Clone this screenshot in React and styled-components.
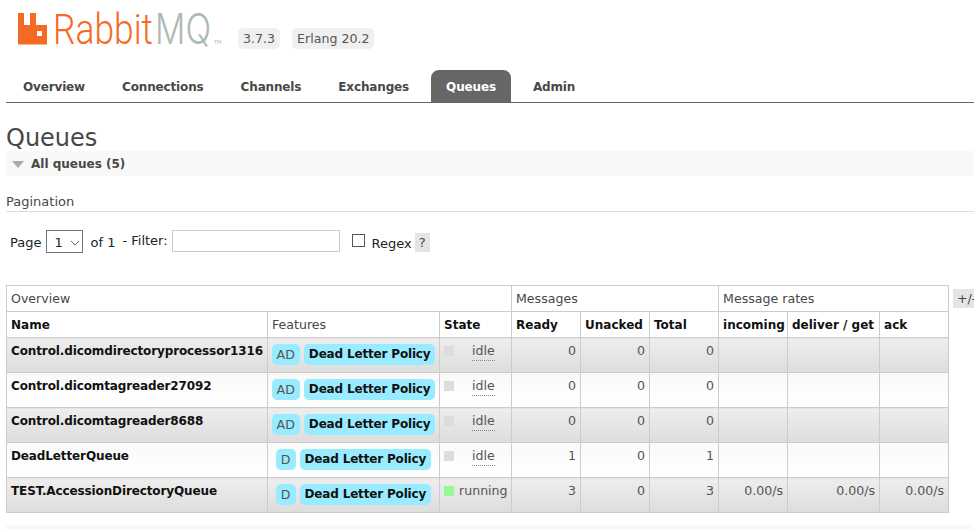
import React from 'react';
import styled, { createGlobalStyle } from 'styled-components';

const GlobalStyle = createGlobalStyle`
    html, body {
        margin: 0;
        padding: 0;
        height: 529px;
        overflow: hidden;
        background: #fff;
    }
    body {
        font-family: "DejaVu Sans", Verdana, sans-serif;
        font-size: 12.6px;
        color: #484848;
    }
`;

const Page = styled.div`
    padding-left: 6px;
    width: 968px;
    height: 529px;
    overflow: hidden;
`;

const Header = styled.header`
    display: flex;
    align-items: flex-start;
    height: 70px;
`;

const Logo = styled.svg`
    display: block;
    margin: 8px 0 0 11px;
    flex: none;
`;

const Versions = styled.div`
    display: flex;
    gap: 12px;
    margin: 28px 0 0 9px;
`;

const VersionTag = styled.span`
    background: #f0f0f0;
    border-radius: 5px;
    height: 21px;
    line-height: 21px;
    padding: 0 5px;
    color: #555;
`;

const Tabs = styled.nav`
    display: flex;
    gap: 7px;
    height: 32px;
    padding-left: 2px;
    border-bottom: 1px solid #666;
`;

const Tab = styled.a`
    display: block;
    height: 32px;
    padding: 0 15px;
    line-height: 34px;
    font-weight: bold;
    font-size: 12px;
    letter-spacing: -0.15px;
    color: ${({ $active }) => ($active ? '#fff' : '#484848')};
    background: ${({ $active }) => ($active ? '#666' : 'transparent')};
    border-radius: 8px 8px 0 0;
`;

const Title = styled.h1`
    margin: 20px 0 0;
    font-size: 24px;
    font-weight: normal;
    line-height: 30px;
    height: 28px;
    color: #484848;
`;

const SectionBar = styled.div`
    display: flex;
    align-items: center;
    height: 25px;
    background: #f8f8f8;
    font-weight: bold;
    font-size: 12px;
    color: #484848;
`;

const Arrow = styled.span`
    width: 0;
    height: 0;
    margin: 1px 7px 0 6px;
    border-left: 6px solid transparent;
    border-right: 6px solid transparent;
    border-top: 7px solid #aaa;
`;

const SubHeading = styled.h3`
    margin: 17px 0 0;
    height: 18px;
    line-height: 18px;
    font-size: 13px;
    font-weight: normal;
    color: #484848;
    border-bottom: 1px solid #ddd;
`;

const FilterRow = styled.div`
    display: flex;
    align-items: center;
    height: 24px;
    margin-top: 17px;
    padding-left: 4px;
    font-size: 13px;
    color: #222;
`;

const PageSelect = styled.select`
    appearance: none;
    box-sizing: border-box;
    width: 37px;
    height: 23px;
    margin: 0 7px 0 5px;
    padding: 2px 0 0 7px;
    font-family: inherit;
    font-size: 13px;
    color: #222;
    background: #fff url("data:image/svg+xml,%3Csvg xmlns='http://www.w3.org/2000/svg' width='10' height='6'%3E%3Cpath d='M1 1l4 4 4-4' fill='none' stroke='%23666' stroke-width='1'/%3E%3C/svg%3E") no-repeat 23px 9px;
    border: 1px solid #767676;
    border-radius: 0;
`;

const FilterText = styled.span`
    margin-left: ${({ $gap }) => $gap || 0}px;
    transform: translateY(${({ $shift }) => $shift || 0}px);
    white-space: nowrap;
`;

const FilterInput = styled.input`
    box-sizing: border-box;
    flex: none;
    width: 168px;
    height: 22px;
    margin-left: 4px;
    border: 1px solid #ccc;
    background: #fff;
    padding: 0 3px;
`;

const RegexBox = styled.input`
    appearance: none;
    box-sizing: border-box;
    flex: none;
    width: 13px;
    height: 13px;
    margin: 0 7px 1px 12px;
    border: 1px solid #555;
    background: #fff;
`;

const Help = styled.span`
    display: block;
    width: 15px;
    height: 19px;
    line-height: 19px;
    margin: 2px 0 0 3px;
    text-align: center;
    background: #e4e4e4;
    color: #484848;
`;

const TableArea = styled.div`
    display: flex;
    align-items: flex-start;
    margin-top: 32px;
`;

const QueueTable = styled.table`
    flex: none;
    width: 943px;
    table-layout: fixed;
    border-collapse: collapse;
    border: 1px solid #ccc;
`;

const GroupCell = styled.th`
    height: 25px;
    padding: 0 4px;
    text-align: left;
    font-weight: normal;
    color: #484848;
    border: 1px solid #ccc;
    background: #fff;
`;

const ColumnCell = styled.th`
    height: 25px;
    padding: 0 4px;
    text-align: left;
    font-size: ${({ $plain }) => ($plain ? '12.6px' : '12px')};
    font-weight: ${({ $plain }) => ($plain ? 'normal' : 'bold')};
    color: ${({ $plain }) => ($plain ? '#484848' : '#111')};
    white-space: nowrap;
    border: 1px solid #ccc;
    background: #fff;
`;

const Row = styled.tr`
    background: ${({ $odd }) =>
        $odd
            ? 'linear-gradient(#eee, #ddd)'
            : 'linear-gradient(#f9f9f9, #fff)'};
`;

const Cell = styled.td`
    height: 35px;
    box-sizing: border-box;
    padding: 6px 4px 0;
    border: 1px solid #ccc;
    vertical-align: top;
    text-align: ${({ $right }) => ($right ? 'right' : 'left')};
    color: #555;
    line-height: 14px;
    background: inherit;
`;

const NameCell = styled(Cell)`
    font-size: 12px;
    font-weight: bold;
    letter-spacing: -0.12px;
    color: #111;
    white-space: nowrap;
`;

const FeatureCell = styled(Cell)`
    padding: 6px 0 0;
`;

const Features = styled.div`
    display: flex;
    justify-content: center;
    gap: 4px;
`;

const Pill = styled.span`
    display: block;
    height: 21px;
    line-height: 21px;
    padding: 0 5px;
    border-radius: 5px;
    background: #99ebff;
    white-space: nowrap;
    color: ${({ $strong }) => ($strong ? '#111' : '#555')};
    font-size: ${({ $strong }) => ($strong ? '12px' : '12.6px')};
    font-weight: ${({ $strong }) => ($strong ? 'bold' : 'normal')};
    letter-spacing: ${({ $strong }) => ($strong ? '-0.17px' : '0')};
`;

const StateBox = styled.div`
    display: flex;
    align-items: flex-start;
`;

const StateDot = styled.span`
    flex: none;
    width: 10px;
    height: 10px;
    margin-top: 2px;
    background: ${({ $running }) => ($running ? '#98f898' : '#ddd')};
`;

const StateLabel = styled.span`
    flex: none;
    white-space: nowrap;
    margin-left: ${({ $idle }) => ($idle ? '18px' : '5px')};
    padding-bottom: 2px;
    border-bottom: ${({ $idle }) => ($idle ? '1px dotted #888' : 'none')};
`;

const ToggleColumns = styled.span`
    display: block;
    flex: none;
    margin: 4px 0 0 4px;
    width: 30px;
    height: 19px;
    line-height: 19px;
    padding-left: 4px;
    background: #e4e4e4;
    color: #484848;
    white-space: nowrap;
`;

const NextSection = styled.div`
    height: 4px;
    margin-top: 12px;
    background: #f8f8f8;
`;

const queues = [
    { name: 'Control.dicomdirectoryprocessor1316', flag: 'AD', state: 'idle', ready: 0, unacked: 0, total: 0 },
    { name: 'Control.dicomtagreader27092', flag: 'AD', state: 'idle', ready: 0, unacked: 0, total: 0 },
    { name: 'Control.dicomtagreader8688', flag: 'AD', state: 'idle', ready: 0, unacked: 0, total: 0 },
    { name: 'DeadLetterQueue', flag: 'D', state: 'idle', ready: 1, unacked: 0, total: 1 },
    { name: 'TEST.AccessionDirectoryQueue', flag: 'D', state: 'running', ready: 3, unacked: 0, total: 3, rates: ['0.00/s', '0.00/s', '0.00/s'] },
];

const tabs = ['Overview', 'Connections', 'Channels', 'Exchanges', 'Queues', 'Admin'];
const widths = [261, 172, 72, 69, 69, 69, 69, 92, 69];

const RabbitLogo = () => (
    <Logo width="212" height="42" viewBox="0 0 212 42">
        <path
            fill="#f46a25"
            fillRule="evenodd"
            d="M1 5h6v12h6V5h6v12h11v19.5H1V5ZM20 23v5h5v-5h-5Z"
        />
        <text
            x="36"
            y="36"
            fontFamily="Roboto, sans-serif"
            fontWeight="300"
            fontSize="43"
            textLength="100"
            lengthAdjust="spacingAndGlyphs"
            fill="#f46a25"
        >
            Rabbit
        </text>
        <text
            x="138"
            y="36"
            fontFamily="Inter, sans-serif"
            fontWeight="300"
            fontSize="42"
            textLength="56"
            lengthAdjust="spacingAndGlyphs"
            fill="#adbab5"
        >
            MQ
        </text>
        <text x="197" y="36" fontFamily="DejaVu Sans, sans-serif" fontSize="5" fill="#adbab5">
            TM
        </text>
    </Logo>
);

const QueueRow = ({ queue, odd }) => (
    <Row $odd={odd}>
        <NameCell>{queue.name}</NameCell>
        <FeatureCell>
            <Features>
                <Pill>{queue.flag}</Pill>
                <Pill $strong>Dead Letter Policy</Pill>
            </Features>
        </FeatureCell>
        <Cell>
            <StateBox>
                <StateDot $running={queue.state === 'running'} />
                <StateLabel $idle={queue.state === 'idle'}>{queue.state}</StateLabel>
            </StateBox>
        </Cell>
        <Cell $right>{queue.ready}</Cell>
        <Cell $right>{queue.unacked}</Cell>
        <Cell $right>{queue.total}</Cell>
        {[0, 1, 2].map((i) => (
            <Cell $right key={i}>{queue.rates ? queue.rates[i] : ''}</Cell>
        ))}
    </Row>
);

const App = () => (
    <Page>
        <GlobalStyle />
        <Header>
            <RabbitLogo />
            <Versions>
                <VersionTag>3.7.3</VersionTag>
                <VersionTag>Erlang 20.2</VersionTag>
            </Versions>
        </Header>
        <Tabs>
            {tabs.map((t) => (
                <Tab key={t} $active={t === 'Queues'}>{t}</Tab>
            ))}
        </Tabs>
        <Title>Queues</Title>
        <SectionBar>
            <Arrow />
            All queues (5)
        </SectionBar>
        <SubHeading>Pagination</SubHeading>
        <FilterRow>
            <FilterText $shift={1}>Page</FilterText>
            <PageSelect defaultValue="1">
                <option value="1">1</option>
            </PageSelect>
            <FilterText $shift={1}>of 1</FilterText>
            <FilterText $gap={7} $shift={-1}>- Filter:</FilterText>
            <FilterInput />
            <RegexBox type="checkbox" />
            <FilterText $shift={2}>Regex</FilterText>
            <Help>?</Help>
        </FilterRow>
        <TableArea>
            <QueueTable>
                <colgroup>
                    {widths.map((w, i) => (
                        <col key={i} width={w} />
                    ))}
                </colgroup>
                <thead>
                    <tr>
                        <GroupCell colSpan={3}>Overview</GroupCell>
                        <GroupCell colSpan={3}>Messages</GroupCell>
                        <GroupCell colSpan={3}>Message rates</GroupCell>
                    </tr>
                    <tr>
                        <ColumnCell>Name</ColumnCell>
                        <ColumnCell $plain>Features</ColumnCell>
                        <ColumnCell>State</ColumnCell>
                        <ColumnCell>Ready</ColumnCell>
                        <ColumnCell>Unacked</ColumnCell>
                        <ColumnCell>Total</ColumnCell>
                        <ColumnCell>incoming</ColumnCell>
                        <ColumnCell>deliver / get</ColumnCell>
                        <ColumnCell>ack</ColumnCell>
                    </tr>
                </thead>
                <tbody>
                    {queues.map((q, i) => (
                        <QueueRow key={q.name} queue={q} odd={i % 2 === 0} />
                    ))}
                </tbody>
            </QueueTable>
            <ToggleColumns>+/-</ToggleColumns>
        </TableArea>
        <NextSection />
    </Page>
);

export default App;
